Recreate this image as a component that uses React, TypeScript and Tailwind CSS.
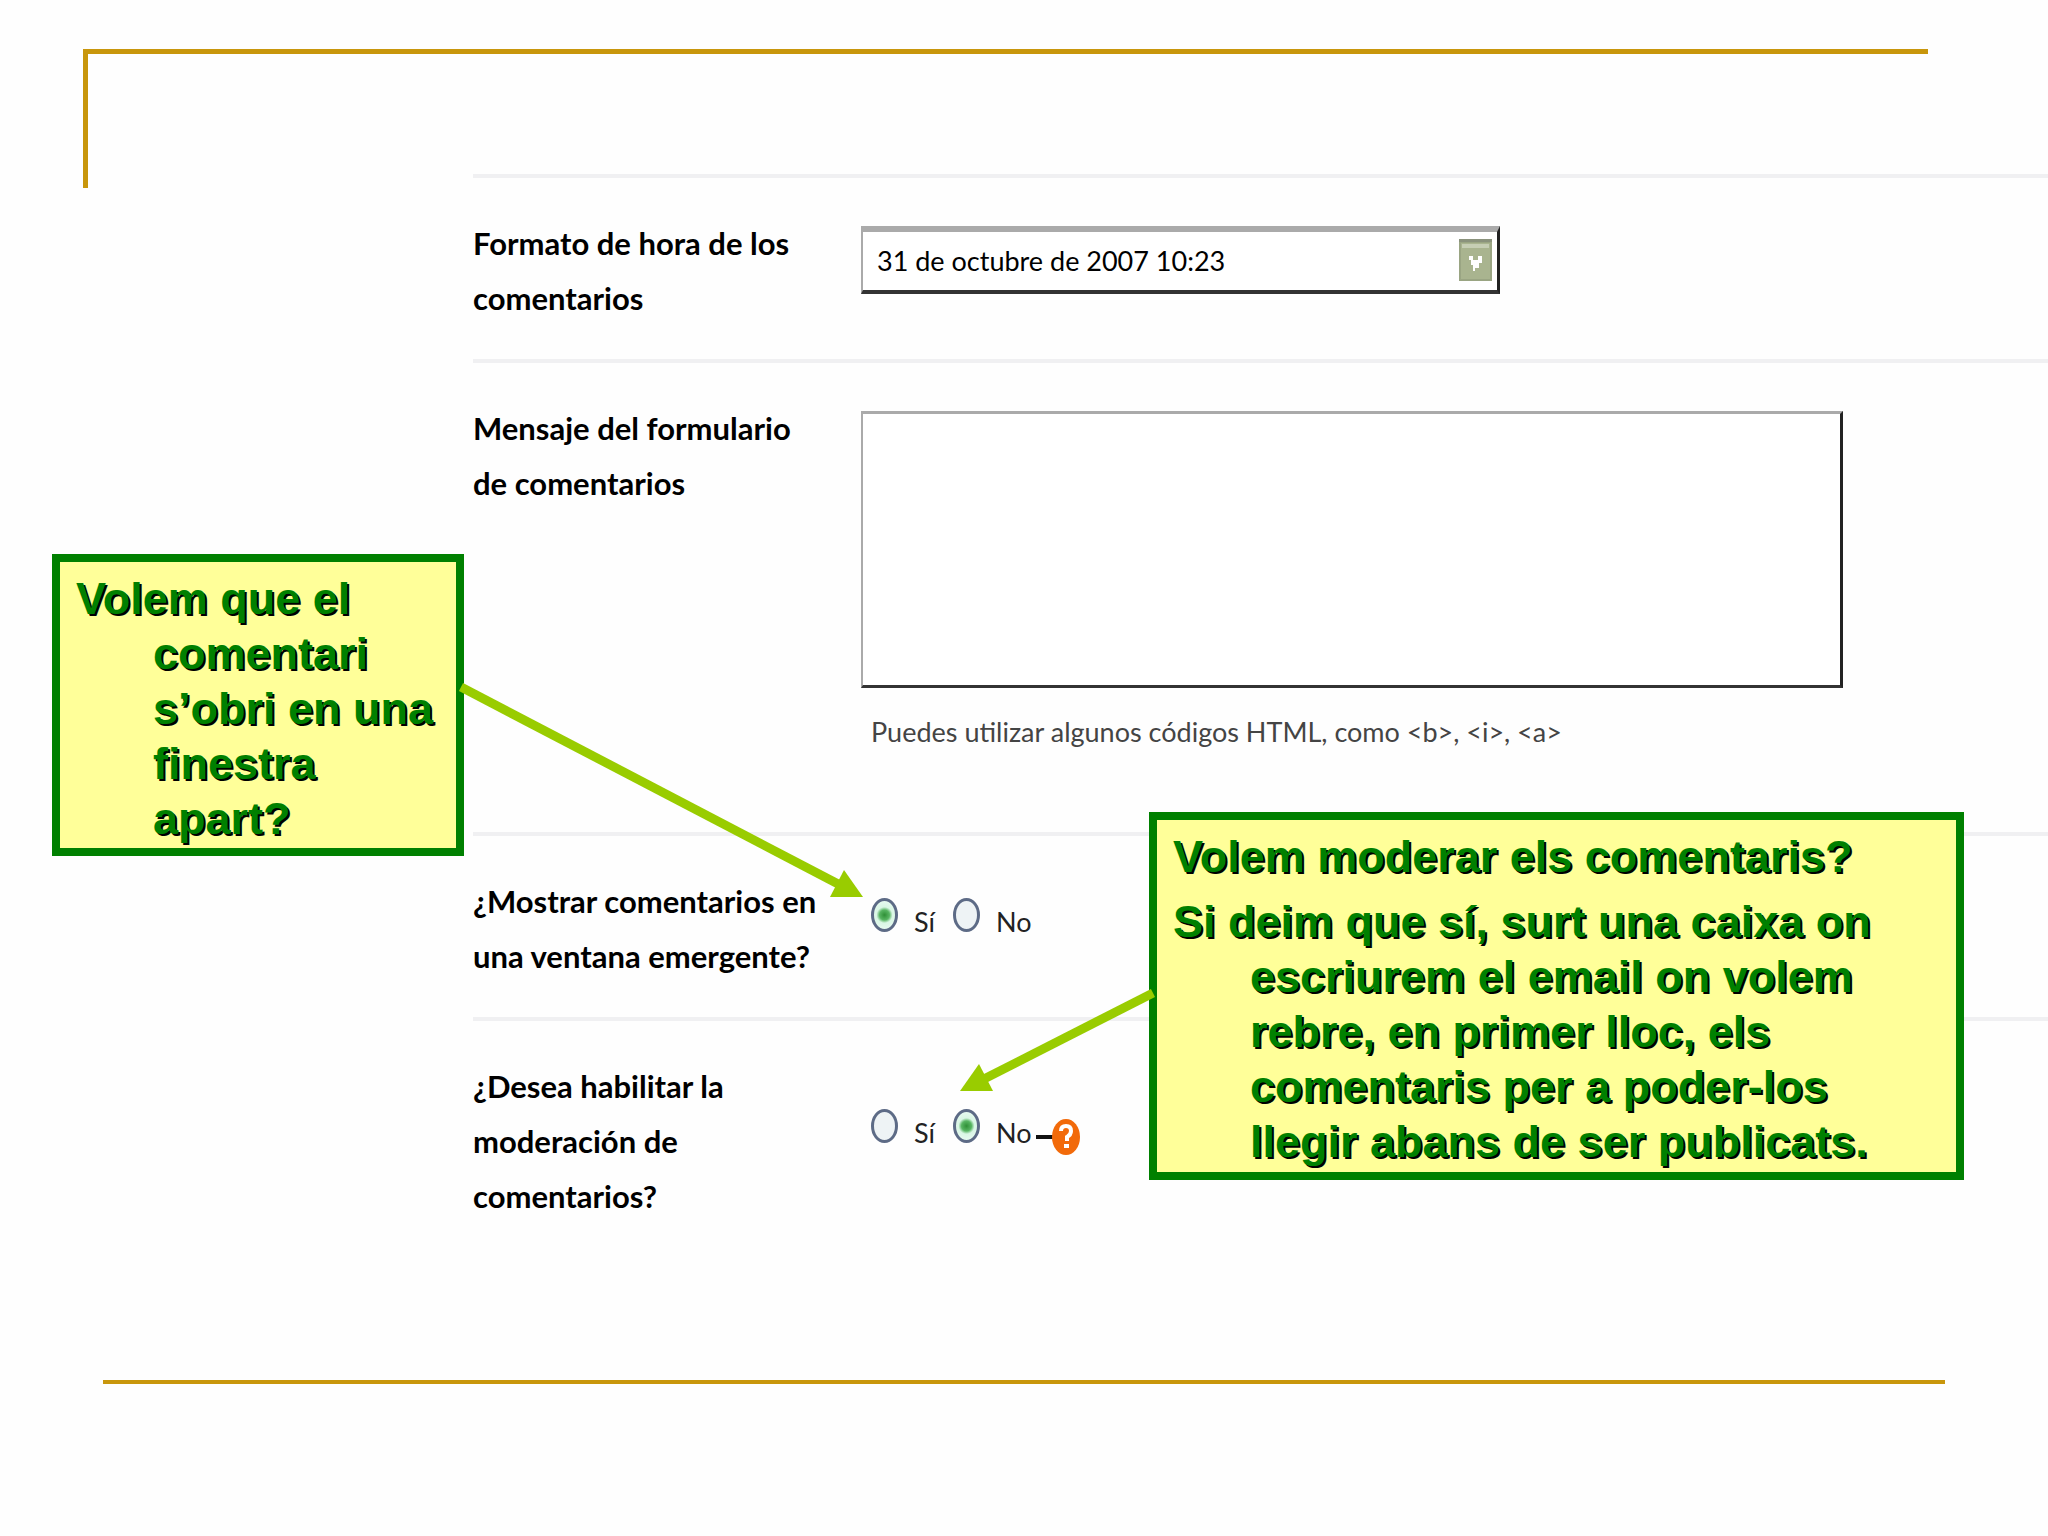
import { ReactNode } from 'react'

function Fila({
  etiqueta,
  htmlFor,
  children,
}: {
  etiqueta: ReactNode
  htmlFor?: string
  children: ReactNode
}) {

  return (

    <div className="flex border-t-4 border-[#f0f0f2] pt-[38px] pb-[33px]">

      <div className="w-[388px] shrink-0 text-[31px] leading-[55px] font-bold text-black">

        {htmlFor
          ? <label htmlFor={htmlFor}>{etiqueta}</label>
          : <span>{etiqueta}</span>}

      </div>

      <div className="flex-1 min-w-0 pt-[10px]">

        {children}

      </div>

    </div>

  )

}

function Opcion({
  nombre,
  texto,
  marcada,
}: {
  nombre: string
  texto: string
  marcada?: boolean
}) {

  return (

    <label className="flex items-baseline gap-4 w-[82px] text-[27px] leading-[40px] text-[#222]">

      <input
        type="radio"
        name={nombre}
        defaultChecked={marcada}
        className="appearance-none shrink-0 w-[27px] h-[34px] rounded-[50%] border-3 border-[#5d6b86] bg-[#eef3f5] checked:bg-[radial-gradient(circle,#2f8f36_0,#58b562_5px,#d9f6e4_8px,#eefcf6_100%)]"
      />

      {texto}

    </label>

  )

}

function Nota({
  className,
  children,
}: {
  className: string
  children: ReactNode
}) {

  return (

    <div className={`absolute flex flex-col gap-[10px] border-8 border-[#008000] bg-[#ffff99] pl-4 pt-[9px] font-['Liberation_Sans',Arial,sans-serif] text-[45px] leading-[55px] font-bold text-[#008000] [text-shadow:2px_2px_0_#000] ${className}`}>

      {children}

    </div>

  )

}

export default function App() {

  return (

    <main className="relative min-h-screen overflow-hidden bg-[#fefefe] pt-[49px]">

      <div className="ml-[83px] mr-[120px] h-[5px] bg-[#c8960c]" />

      <div className="flex">

        <div className="w-[473px] shrink-0">

          <div className="ml-[83px] w-[5px] h-[134px] bg-[#c8960c]" />

        </div>

        <form className="flex-1 min-w-0 pt-[120px] font-['Lato',sans-serif]">

          <Fila
            etiqueta={<>Formato de hora de los<br />comentarios</>}
            htmlFor="formato"
          >

            <div className="relative w-[639px]">

              <select
                id="formato"
                className="block w-full h-[68px] appearance-none border-t-6 border-l-2 border-r-3 border-b-4 border-t-[#aaa] border-l-[#aaa] border-r-[#222] border-b-[#333] bg-white pl-[14px] text-[27px] text-black"
              >

                <option>31 de octubre de 2007 10:23</option>

              </select>

              <svg
                className="absolute right-2 top-[13px] w-[33px] h-[42px] pointer-events-none"
                viewBox="0 0 33 42"
              >
                <rect width="33" height="42" fill="#9aa583" />
                <rect x="2" y="4" width="29" height="36" fill="#a9b48f" />
                <path d="M0 0H33V3H0Z" fill="#8a927c" />
                <path d="M3 5H30V9H3Z" fill="#c6ceb4" />
                <path d="M10 17h4v4h5v-4h4v7h-3v5h-4v3h-2v-6h-2v-5h-2z" fill="#fff" />
              </svg>

            </div>

          </Fila>

          <Fila
            etiqueta={<>Mensaje del formulario<br />de comentarios</>}
            htmlFor="mensaje"
          >

            <textarea
              id="mensaje"
              className="block w-full max-w-[982px] h-[277px] resize-none border-t-3 border-l-2 border-r-3 border-b-3 border-t-[#aaa] border-l-[#aaa] border-r-[#222] border-b-[#333] bg-white p-3 text-[27px]"
            />

            <p className="mt-6 mb-[47px] pl-[10px] text-[27px] leading-[40px] text-[#444]">

              {'Puedes utilizar algunos códigos HTML, como <b>, <i>, <a>'}

            </p>

          </Fila>

          <Fila etiqueta={<>¿Mostrar comentarios en<br />una ventana emergente?</>}>

            <div className="flex pt-[14px] pl-[10px]">

              <Opcion nombre="ventana" texto="Sí" marcada />
              <Opcion nombre="ventana" texto="No" />

            </div>

          </Fila>

          <Fila etiqueta={<>¿Desea habilitar la<br />moderación de<br />comentarios?</>}>

            <div className="flex pt-10 pl-[10px]">

              <Opcion nombre="moderacion" texto="Sí" />
              <Opcion nombre="moderacion" texto="No" marcada />

              <button type="button" aria-label="Ayuda" className="h-[36px] mt-[10px]">

                <svg className="w-[45px] h-[36px]" viewBox="0 0 45 36">
                  <path d="M1 16H18V20H1Z" fill="#111" />
                  <ellipse cx="31" cy="18" rx="14" ry="18" fill="#f26a0a" />
                  <path d="M26 12q0-5 5-5t5 5q0 4-4 6v4" fill="none" stroke="#fff" strokeWidth="4" />
                  <path d="M29 25h5v4h-5z" fill="#fff" />
                </svg>

              </button>

            </div>

          </Fila>

        </form>

      </div>

      <div className="mt-[123px] ml-[103px] mr-[103px] h-[4px] bg-[#c8960c]" />

      <Nota className="left-[52px] top-[554px] w-[412px] h-[302px]">

        <p className="pl-[77px] -indent-[77px]">
          Volem que el comentari s’obri en una finestra apart?
        </p>

      </Nota>

      <Nota className="left-[1149px] top-[812px] w-[815px] h-[368px]">

        <p>Volem moderar els comentaris?</p>

        <p className="pl-[77px] pr-5 -indent-[77px]">
          Si deim que sí, surt una caixa on escriurem el email on volem rebre, en primer lloc, els comentaris per a poder-los llegir abans de ser publicats.
        </p>

      </Nota>

      {/* flechas de las notas a las opciones */}
      <svg
        className="absolute left-0 top-0 w-[2048px] h-[1536px] pointer-events-none"
        viewBox="0 0 2048 1536"
        fill="#99cc00"
        stroke="#99cc00"
      >
        <path d="M461 687L842 886" strokeWidth="9" />
        <path d="M863 897L844 870L830 897Z" stroke="none" />
        <path d="M1153 993L982 1080" strokeWidth="9" />
        <path d="M960 1091L979 1064L993 1091Z" stroke="none" />
      </svg>

    </main>

  )

}
